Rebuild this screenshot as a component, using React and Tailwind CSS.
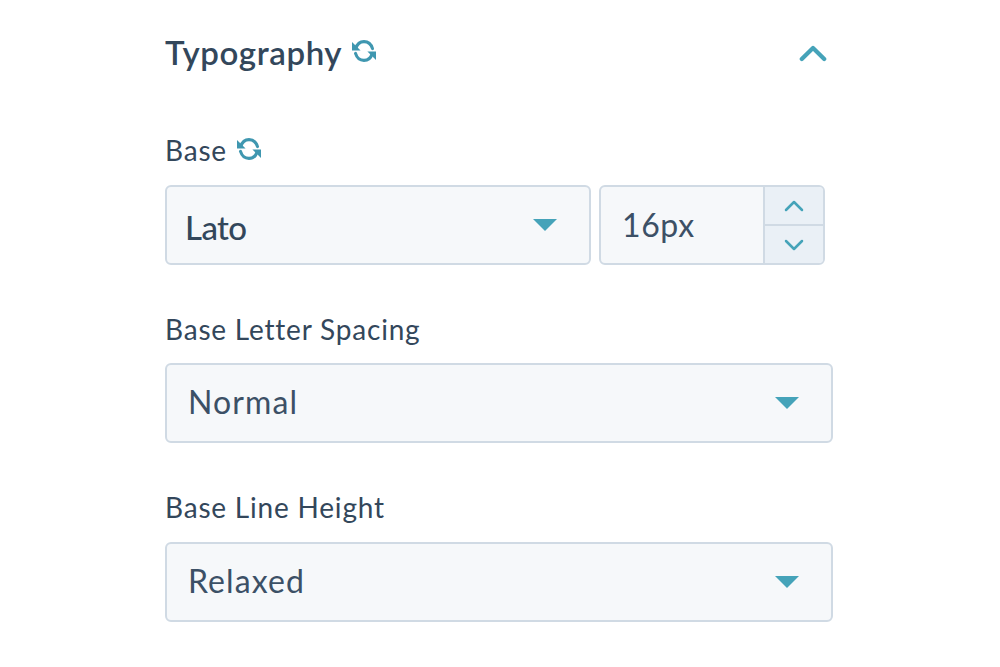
import React from 'react';

const font = "font-['Lato',sans-serif]";

function SyncIcon({ className }) {
  return (
    <svg className={className} viewBox="0 0 26 26" fill="none">
      <path d="M4.8 10.5C6 6.4 9.2 3.6 13 3.6c3.9 0 7.2 2.8 8.5 7" stroke="#3f97b0" strokeWidth="3.1" strokeLinecap="round" />
      <path d="M21.2 15.5C20 19.6 16.8 22.4 13 22.4c-3.9 0-7.2-2.8-8.5-7" stroke="#3f97b0" strokeWidth="3.1" strokeLinecap="round" />
      <path d="M1 4v8.6h8.6z" fill="#3f97b0" />
      <path d="M25 22v-8.6h-8.6z" fill="#3f97b0" />
    </svg>
  );
}

function Chevron({ up, className, width = 2.5 }) {
  return (
    <svg className={className} viewBox="0 0 20 12" fill="none">
      <path d={up ? 'M2 10l8-8 8 8' : 'M2 2l8 8 8-8'} stroke="#45a3b9" strokeWidth={width} strokeLinecap="round" strokeLinejoin="round" />
    </svg>
  );
}

function Caret() {
  return <div className="w-0 h-0 border-x-[12px] border-x-transparent border-t-[12px] border-t-[#45a3b9]" />;
}

function SelectBox({ value, bold, className }) {
  return (
    <div className={`h-[80px] flex items-center justify-between bg-[#f6f8fa] border-2 border-[#d0dae4] rounded-[6px] ${className}`}>
      <span className={bold ? 'text-[33px] font-medium pl-[18px] pt-[6px] tracking-[-0.6px] text-[#33475b]' : 'text-[32px] pl-[21px] pb-[2px] tracking-[1.1px] text-[#3c5066]'}>{value}</span>
      <span className="pr-[32px]"><Caret /></span>
    </div>
  );
}

export default function App() {
  return (
    <div className={`w-[1000px] h-[667px] bg-white pl-[165px] pt-[30px] text-[#33475b] overflow-hidden ${font}`}>
      <div className="w-[668px]">
        <div className="flex items-center justify-between h-[46px] pr-[6px]">
          <div className="flex items-center gap-[9px]">
            <h2 className="text-[33px] font-semibold tracking-[0.6px] leading-none pb-[2px]">Typography</h2>
            <SyncIcon className="w-[26px] h-[26px] -mt-[5px]" />
          </div>
          <Chevron up className="w-[28px] h-[17px]" width={3} />
        </div>

        <div className="flex items-center gap-[9px] mt-[54px] h-[40px]">
          <label className="text-[28px] tracking-[0.8px]">Base</label>
          <SyncIcon className="w-[26px] h-[26px] -mt-[2px]" />
        </div>
        <div className="flex mt-[15px] w-[660px] gap-[8px]">
          <SelectBox value="Lato" bold className="w-[426px]" />
          <div className="flex-1 h-[80px] flex bg-[#f6f8fa] border-2 border-[#d0dae4] rounded-[6px] overflow-hidden">
            <div className="flex-1 flex items-center pl-[21px] text-[32px] tracking-[0.6px] text-[#3c5066]">16px</div>
            <div className="w-[60px] flex flex-col bg-[#eaf0f6] border-l-2 border-[#d0dae4]">
              <div className="flex-1 flex items-center justify-center border-b-2 border-[#d0dae4]">
                <Chevron up className="w-[20px] h-[12px]" />
              </div>
              <div className="flex-1 flex items-center justify-center">
                <Chevron className="w-[20px] h-[12px]" />
              </div>
            </div>
          </div>
        </div>

        <label className="block text-[28px] tracking-[0.8px] mt-[44px] h-[40px] leading-[40px]">Base Letter Spacing</label>
        <SelectBox value="Normal" className="mt-[14px] w-full" />

        <label className="block text-[28px] tracking-[0.8px] mt-[44px] h-[40px] leading-[40px]">Base Line Height</label>
        <SelectBox value="Relaxed" className="mt-[15px] w-full" />
      </div>
    </div>
  );
}
